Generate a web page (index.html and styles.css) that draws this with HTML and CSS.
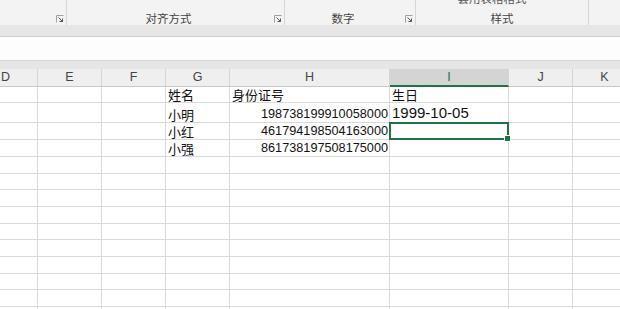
FILE: index.html
```html
<!DOCTYPE html>
<html lang="zh-CN">
<head>
<meta charset="utf-8">
<link rel="stylesheet" href="styles.css">
</head>
<body>
<div class="ribbon">
  <div class="group g0">
    <span class="label"></span>
    <span class="launcher"><svg width="8" height="8" viewBox="0 0 8 8"><path d="M0.5 7.5V0.5H7.5" stroke="#a0a0a0" fill="none"/><path d="M2.5 2.5L6.5 6.5M3.5 6.5H6.5V3.5" stroke="#555" fill="none"/></svg></span>
  </div>
  <div class="group g1">
    <span class="label">对齐方式</span>
    <span class="launcher"><svg width="8" height="8" viewBox="0 0 8 8"><path d="M0.5 7.5V0.5H7.5" stroke="#a0a0a0" fill="none"/><path d="M2.5 2.5L6.5 6.5M3.5 6.5H6.5V3.5" stroke="#555" fill="none"/></svg></span>
  </div>
  <div class="group g2">
    <span class="label">数字</span>
    <span class="launcher"><svg width="8" height="8" viewBox="0 0 8 8"><path d="M0.5 7.5V0.5H7.5" stroke="#a0a0a0" fill="none"/><path d="M2.5 2.5L6.5 6.5M3.5 6.5H6.5V3.5" stroke="#555" fill="none"/></svg></span>
  </div>
  <div class="group g3">
    <div class="stack">
      <span class="cut">套用表格格式</span>
      <span class="label">样式</span>
    </div>
  </div>
  <div class="group g4"></div>
</div>
<div class="band"></div>
<div class="formula"></div>
<div class="gap"></div>
<div class="sheet">
  <div class="ch">D</div><div class="ch">E</div><div class="ch">F</div><div class="ch">G</div><div class="ch">H</div><div class="ch sel">I</div><div class="ch">J</div><div class="ch">K</div>

  <div class="c"></div><div class="c"></div><div class="c"></div><div class="c">姓名</div><div class="c">身份证号</div><div class="c">生日</div><div class="c"></div><div class="c"></div>

  <div class="c r2"></div><div class="c r2"></div><div class="c r2"></div><div class="c r2">小明</div><div class="c r2 num">198738199910058000</div><div class="c r2 date">1999-10-05</div><div class="c r2"></div><div class="c r2"></div>

  <div class="c"></div><div class="c"></div><div class="c"></div><div class="c">小红</div><div class="c num">461794198504163000</div><div class="c active"></div><div class="c"></div><div class="c"></div>

  <div class="c"></div><div class="c"></div><div class="c"></div><div class="c">小强</div><div class="c num">861738197508175000</div><div class="c"></div><div class="c"></div><div class="c"></div>

  <div class="c"></div><div class="c"></div><div class="c"></div><div class="c"></div><div class="c"></div><div class="c"></div><div class="c"></div><div class="c"></div>
  <div class="c"></div><div class="c"></div><div class="c"></div><div class="c"></div><div class="c"></div><div class="c"></div><div class="c"></div><div class="c"></div>
  <div class="c"></div><div class="c"></div><div class="c"></div><div class="c"></div><div class="c"></div><div class="c"></div><div class="c"></div><div class="c"></div>
  <div class="c"></div><div class="c"></div><div class="c"></div><div class="c"></div><div class="c"></div><div class="c"></div><div class="c"></div><div class="c"></div>
  <div class="c"></div><div class="c"></div><div class="c"></div><div class="c"></div><div class="c"></div><div class="c"></div><div class="c"></div><div class="c"></div>
  <div class="c"></div><div class="c"></div><div class="c"></div><div class="c"></div><div class="c"></div><div class="c"></div><div class="c"></div><div class="c"></div>
  <div class="c"></div><div class="c"></div><div class="c"></div><div class="c"></div><div class="c"></div><div class="c"></div><div class="c"></div><div class="c"></div>
  <div class="c"></div><div class="c"></div><div class="c"></div><div class="c"></div><div class="c"></div><div class="c"></div><div class="c"></div><div class="c"></div>
  <div class="c"></div><div class="c"></div><div class="c"></div><div class="c"></div><div class="c"></div><div class="c"></div><div class="c"></div><div class="c"></div>
  <div class="c"></div><div class="c"></div><div class="c"></div><div class="c"></div><div class="c"></div><div class="c"></div><div class="c"></div><div class="c"></div>
</div>
</body>
</html>
```

FILE: styles.css
```css
html, body {
  margin: 0;
  padding: 0;
}
body {
  width: 620px;
  height: 309px;
  overflow: hidden;
  background: #ffffff;
  font-family: "Noto Sans CJK SC", "Noto Sans", sans-serif;
}

.ribbon {
  height: 25px;
  background: #f3f3f3;
  display: flex;
  overflow: hidden;
}
.group {
  display: flex;
  align-items: flex-end;
  height: 25px;
  border-right: 1px solid #d6d6d6;
  box-sizing: border-box;
  flex: none;
}
.g0 { width: 67px; }
.g1 { width: 218px; }
.g2 { width: 131px; }
.g3 { width: 173px; }
.g4 { flex: 1; border-right: none; }

.label {
  flex: 1;
  text-align: center;
  font-size: 11.5px;
  line-height: 14px;
  color: #444;
}
.launcher {
  width: 8px;
  height: 8px;
  margin: 0 2px 2px 4px;
  display: flex;
}
.stack {
  flex: 1;
  display: flex;
  flex-direction: column;
  align-items: center;
  height: 25px;
  justify-content: space-between;
}
.cut {
  font-size: 11.5px;
  line-height: 12px;
  color: #555;
  margin-top: -8px;
  margin-right: 20px;
}
.stack .label { flex: none; }

.band {
  height: 11px;
  background: #e6e6e6;
  border-bottom: 1px solid #cfcfcf;
}
.formula {
  height: 23px;
  background: #fdfdfd;
  border-bottom: 1px solid #d4d4d4;
}
.gap {
  height: 8px;
  background: #e6e6e6;
}

.sheet {
  display: grid;
  grid-template-columns: 38px 64px 64px 64px 160px 119px 64px 64px;
  grid-template-rows: 18px 16px 20px 17px 17px repeat(10, 16.67px);
  font-size: 13px;
  color: #111;
}
.ch {
  background: #efefef;
  border-right: 1px solid #d5d5d5;
  border-bottom: 1px solid #c8c8c8;
  box-sizing: border-box;
  text-align: center;
  font-family: "Liberation Sans", Arial, sans-serif;
  font-size: 12.5px;
  line-height: 17px;
  color: #444;
}
.ch:first-child {
  text-align: left;
  padding-left: 1px;
}
.ch.sel {
  background: #d4d4d4;
  border-bottom: 2px solid #217346;
  color: #217346;
}
.c {
  border-right: 1px solid #dadada;
  border-bottom: 1px solid #dadada;
  box-sizing: border-box;
  padding: 0 2px;
  display: flex;
  align-items: flex-end;
  line-height: 15px;
  white-space: nowrap;
  overflow: visible;
}
.num {
  justify-content: flex-end;
  font-family: "Liberation Sans", Arial, sans-serif;
  font-size: 12.7px;
  line-height: 15px;
  padding-right: 1px;
}
.date {
  font-family: "Liberation Sans", Arial, sans-serif;
  font-size: 15px;
  line-height: 18px;
}
.active {
  position: relative;
}
.active::after {
  content: "";
  position: absolute;
  left: -1px;
  top: -1px;
  right: -1px;
  bottom: -1px;
  border: 2px solid #217346;
}
.active::before {
  content: "";
  position: absolute;
  right: -3px;
  bottom: -3px;
  width: 5px;
  height: 5px;
  background: #217346;
  border: 1px solid #fff;
  box-sizing: content-box;
  z-index: 2;
}
```
